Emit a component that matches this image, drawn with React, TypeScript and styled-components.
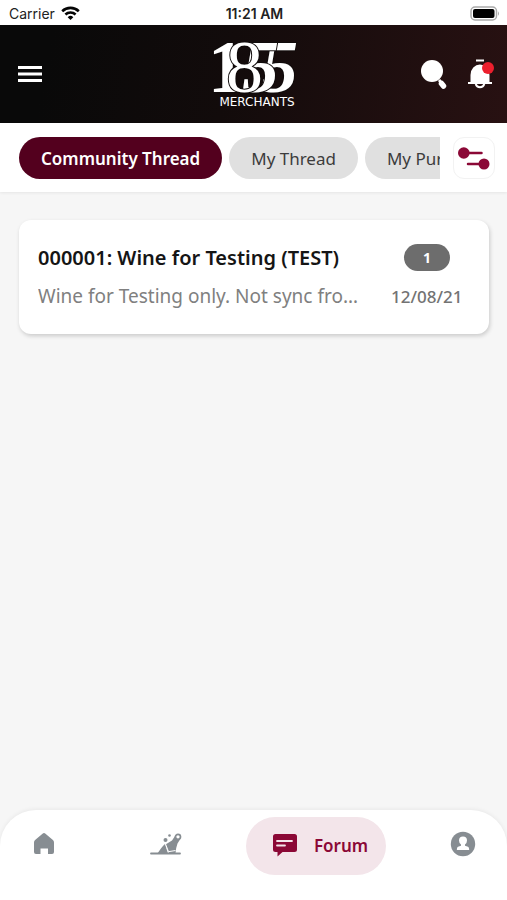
import React from "react";
import styled, { createGlobalStyle } from "styled-components";

const GlobalStyle = createGlobalStyle`
  *, *::before, *::after { box-sizing: border-box; }
  body { margin: 0; background: #f6f6f6; font-family: "Noto Sans", "Open Sans", sans-serif; }
  button, a { font: inherit; color: inherit; }
  h2, p { margin: 0; }
`;

const Screen = styled.div`
  display: flex;
  flex-direction: column;
  min-height: 100vh;
`;

const StatusBar = styled.div`
  display: grid;
  grid-template-columns: 1fr auto 1fr;
  align-items: center;
  height: 25px;
  padding: 2px 7px 0 9px;
  background: #fff;
  color: #222;
  font: 400 14px/20px Inter, sans-serif;
`;

const Carrier = styled.span`
  display: flex;
  align-items: center;
  gap: 6px;
`;

const Clock = styled.time`
  font-weight: 600;
`;

const Battery = styled.svg`
  justify-self: end;
`;

const Header = styled.header`
  display: grid;
  grid-template-columns: 1fr auto 1fr;
  align-items: center;
  height: 98px;
  padding: 0 12px 0 18px;
  background: linear-gradient(100deg, #090909 10%, #120b0b 45%, #281112 100%);
  color: #fff;
`;

const HeaderActions = styled.div`
  display: flex;
  justify-content: flex-end;
  gap: 20px;
`;

const IconButton = styled.button`
  display: flex;
  justify-self: start;
  padding: 0;
  border: 0;
  background: none;
  cursor: pointer;
`;

const FilterBar = styled.div`
  display: flex;
  align-items: center;
  gap: 13px;
  padding: 14px 12px 13px 19px;
  background: #fff;
  box-shadow: 0 1px 3px rgba(0, 0, 0, 0.07);
`;

const ChipScroller = styled.div`
  display: flex;
  flex: 1;
  gap: 7px;
  min-width: 0;
  overflow-x: auto;
  scrollbar-width: none;
`;

const Chip = styled.button<{ $active?: boolean }>`
  flex: none;
  height: 42px;
  padding: 0 22px;
  border: 0;
  border-radius: 21px;
  background: ${(p) => (p.$active ? "#53001e" : "#e0e0e0")};
  color: ${(p) => (p.$active ? "#fff" : "#3c3c3c")};
  font-size: 17px;
  font-weight: ${(p) => (p.$active ? 600 : 400)};
  white-space: nowrap;
  cursor: pointer;
`;

const FilterButton = styled(IconButton)`
  flex: none;
  align-items: center;
  justify-content: center;
  width: 42px;
  height: 42px;
  border: 1px solid #f2f2f2;
  border-radius: 11px;
  background: #fff;
`;

const ThreadList = styled.main`
  flex: 1;
  padding: 28px 18px 28px 19px;
`;

const ThreadCard = styled.article`
  display: grid;
  grid-template-columns: minmax(0, 1fr) 72px;
  column-gap: 24px;
  row-gap: 12px;
  align-items: center;
  padding: 24px 26px 24px 19px;
  border-radius: 12px;
  background: #fff;
  box-shadow: 1px 2px 4px rgba(0, 0, 0, 0.18);
`;

const ThreadTitle = styled.h2`
  overflow: hidden;
  color: #151515;
  font-size: 20px;
  font-weight: 600;
  line-height: 27px;
  white-space: nowrap;
  text-overflow: ellipsis;
`;

const ThreadExcerpt = styled.p`
  overflow: hidden;
  color: #808080;
  font-size: 19px;
  line-height: 27px;
  white-space: nowrap;
  text-overflow: ellipsis;
`;

const CountBadge = styled.span`
  justify-self: center;
  width: 46px;
  border-radius: 14px;
  background: #6d6d6d;
  color: #fff;
  font-size: 14px;
  font-weight: 700;
  line-height: 27px;
  text-align: center;
`;

const ThreadDate = styled.time`
  color: #737373;
  font-size: 17px;
  font-weight: 500;
  line-height: 27px;
  white-space: nowrap;
`;

const BottomNav = styled.nav`
  display: flex;
  align-items: center;
  justify-content: space-between;
  height: 90px;
  padding: 7px 31px 25px 32px;
  border-radius: 36px 36px 0 0;
  background: #fff;
  box-shadow: 0 -1px 4px rgba(0, 0, 0, 0.06);
  color: #878d92;
`;

const NavLink = styled.a<{ $inset?: boolean }>`
  display: flex;
  align-items: center;
  padding-bottom: 4px;
  padding-left: ${(p) => (p.$inset ? "30px" : "0")};
  text-decoration: none;
`;

const ActiveNavLink = styled(NavLink)`
  gap: 16px;
  height: 58px;
  padding: 0 18px 2px 26px;
  border-radius: 29px;
  background: #f3e5ea;
  color: #8b0836;
  font-size: 17px;
  font-weight: 600;
`;

const WifiIcon = () => (
  <svg width="19" height="15" viewBox="0 0 19 15" fill="none" stroke="#050505" aria-hidden="true">
    <path d="M1.2 5.2a12 12 0 0 1 16.6 0" strokeWidth="2.6" />
    <path d="M4.4 8.5a7.3 7.3 0 0 1 10.2 0" strokeWidth="2.5" />
    <path d="M9.5 14 6.7 11.2a4 4 0 0 1 5.6 0Z" fill="#050505" stroke="none" />
  </svg>
);

const BatteryIcon = () => (
  <Battery width="30" height="16" viewBox="0 0 30 16" role="img" aria-label="Battery full">
    <rect x="1" y="1" width="25.500" height="13" rx="4" fill="#fff" stroke="#aaa" strokeWidth="1.5" />
    <rect x="3" y="3" width="21.500" height="9" rx="2" fill="#000" />
    <path d="M28 5.2q2 2.300 0 4.600Z" fill="#aaa" />
  </Battery>
);

const MenuIcon = () => (
  <svg width="24" height="18" viewBox="0 0 24 18" fill="#fff" aria-hidden="true">
    <rect y="1" width="24" height="3" />
    <rect y="7.500" width="24" height="3" />
    <rect y="14" width="24" height="3" />
  </svg>
);

const LogoMark = styled.svg`
  display: block;
  overflow: visible;
`;

const LogoDigit = styled.text<{ $slanted?: boolean; $light?: boolean }>`
  fill: #fff;
  stroke: #100b0b;
  stroke-width: 2px;
  paint-order: stroke;
  font-family: "Liberation Serif", serif;
  font-size: 74px;
  font-style: ${(p) => (p.$slanted ? "italic" : "normal")};
  font-weight: ${(p) => (p.$light ? 400 : 700)};
`;

const LogoName = styled.text`
  fill: #fff;
  font: 400 12px "DejaVu Sans", sans-serif;
`;

const Logo = () => (
  <LogoMark width="86" height="72" viewBox="0 0 86 72" role="img" aria-label="1855 Merchants">
    <LogoDigit $slanted x="47" y="54">5</LogoDigit>
    <LogoDigit $slanted x="28" y="54">5</LogoDigit>
    <LogoDigit x="-6" y="54">1</LogoDigit>
    <LogoDigit $light x="12" y="54">8</LogoDigit>
    <LogoName x="43" y="68" textAnchor="middle">MERCHANTS</LogoName>
  </LogoMark>
);

const SearchIcon = () => (
  <svg width="27" height="32" viewBox="0 0 27 32" aria-hidden="true">
    <circle cx="12" cy="13" r="11" fill="#fff" />
    <path d="m19 22 1.500 1.500" stroke="#fff" strokeWidth="3" />
    <path d="m21.500 25.500 2 2.500" stroke="#fff" strokeWidth="5.500" strokeLinecap="round" />
  </svg>
);

const BellIcon = () => (
  <svg width="28" height="32" viewBox="0 0 28 32" aria-hidden="true">
    <path d="M9 2.500h8" stroke="#fff" strokeWidth="2" />
    <path d="M3.500 24V17a9.500 10.500 0 0 1 19 0v7H25v2H1v-2z" fill="#fff" />
    <path d="M8.700 26a4.500 4.500 0 0 0 8.600 0" fill="none" stroke="#fff" strokeWidth="2" />
    <circle cx="21" cy="10" r="6" fill="#ec1f2d" />
  </svg>
);

const FilterIcon = () => (
  <svg width="32" height="24" viewBox="0 0 32 24" fill="#8b0836" stroke="#8b0836" aria-hidden="true">
    <path d="M6 7h17.500M10 18h17" strokeWidth="2.500" strokeLinecap="round" />
    <circle cx="5.800" cy="7" r="5.800" stroke="none" />
    <circle cx="26" cy="18" r="5.500" stroke="none" />
  </svg>
);

const HomeIcon = () => (
  <svg width="24" height="24" viewBox="0 0 24 24" fill="currentColor" aria-hidden="true">
    <path d="M10.500 1.700a2.300 2.300 0 0 1 3 0l7.400 6.400A3.200 3.200 0 0 1 22 10.500V20a2 2 0 0 1-2 2h-4v-5.500H8.500V22H4a2 2 0 0 1-2-2v-9.500c0-.9.400-1.800 1.100-2.400z" />
  </svg>
);

const BottleIcon = () => (
  <svg width="32" height="24" viewBox="0 0 32 24" fill="currentColor" aria-hidden="true">
    <path d="M1 21.500h29" stroke="currentColor" strokeWidth="1.800" strokeLinecap="round" />
    <path d="M7.500 21.500Q12 14.500 15 12l3 9.500z" />
    <path d="M15.500 12.500 22 8.500 25 4l5 3.500-2.500 4q-1.500 4-2 9.500H19z" />
    <path d="m15.500 12 3 7.700 7-1.200" fill="none" stroke="#fff" strokeWidth="1" />
    <circle cx="28" cy="4.800" r="2.500" fill="#fff" stroke="currentColor" strokeWidth="1.700" />
    <circle cx="15.500" cy="8" r="2" />
    <circle cx="19.500" cy="3.500" r="1.300" />
  </svg>
);

const ForumIcon = () => (
  <svg width="26" height="24" viewBox="0 0 26 24" aria-hidden="true">
    <path d="M3.500 1h19A2.500 2.500 0 0 1 25 3.500v13a2.500 2.500 0 0 1-2.500 2.500H10.500l-5 4.500V19h-2A2.500 2.500 0 0 1 1 16.500v-13A2.500 2.500 0 0 1 3.500 1z" fill="currentColor" />
    <path d="M5 8h15M5 12.500h8" stroke="#f3e5ea" strokeWidth="1.800" strokeLinecap="round" />
  </svg>
);

const ProfileIcon = () => (
  <svg width="26" height="26" viewBox="0 0 26 26" aria-hidden="true">
    <circle cx="13" cy="13" r="12.200" fill="currentColor" />
    <path d="M13 5.500a4 4 0 0 1 4 4q0 2.500-2 4v1.200l3 1q1.200.5 1.200 3.300H6.800q0-2.800 1.200-3.300l3-1v-1.200q-2-1.500-2-4a4 4 0 0 1 4-4z" fill="#fff" />
  </svg>
);

const chips = ["Community Thread", "My Thread", "My Purchases"];

const threads = [
  {
    title: "000001: Wine for Testing (TEST)",
    excerpt: "Wine for Testing only. Not sync from the live stock.",
    count: 1,
    date: "12/08/21",
  },
];

export default function App() {
  return (
    <>
      <GlobalStyle />
      <Screen>
        <StatusBar>
          <Carrier>Carrier <WifiIcon /></Carrier>
          <Clock>11:21 AM</Clock>
          <BatteryIcon />
        </StatusBar>
        <Header>
          <IconButton aria-label="Menu"><MenuIcon /></IconButton>
          <Logo />
          <HeaderActions>
            <IconButton aria-label="Search"><SearchIcon /></IconButton>
            <IconButton aria-label="Notifications"><BellIcon /></IconButton>
          </HeaderActions>
        </Header>
        <FilterBar>
          <ChipScroller>
            {chips.map((label, i) => (
              <Chip key={label} $active={i === 0} aria-pressed={i === 0}>{label}</Chip>
            ))}
          </ChipScroller>
          <FilterButton aria-label="Filter"><FilterIcon /></FilterButton>
        </FilterBar>
        <ThreadList>
          {threads.map((t) => (
            <ThreadCard key={t.title}>
              <ThreadTitle>{t.title}</ThreadTitle>
              <CountBadge>{t.count}</CountBadge>
              <ThreadExcerpt>{t.excerpt}</ThreadExcerpt>
              <ThreadDate>{t.date}</ThreadDate>
            </ThreadCard>
          ))}
        </ThreadList>
        <BottomNav>
          <NavLink href="#home" aria-label="Home"><HomeIcon /></NavLink>
          <NavLink $inset href="#wines" aria-label="Wines"><BottleIcon /></NavLink>
          <ActiveNavLink href="#forum" aria-current="page"><ForumIcon />Forum</ActiveNavLink>
          <NavLink href="#profile" aria-label="Profile"><ProfileIcon /></NavLink>
        </BottomNav>
      </Screen>
    </>
  );
}
